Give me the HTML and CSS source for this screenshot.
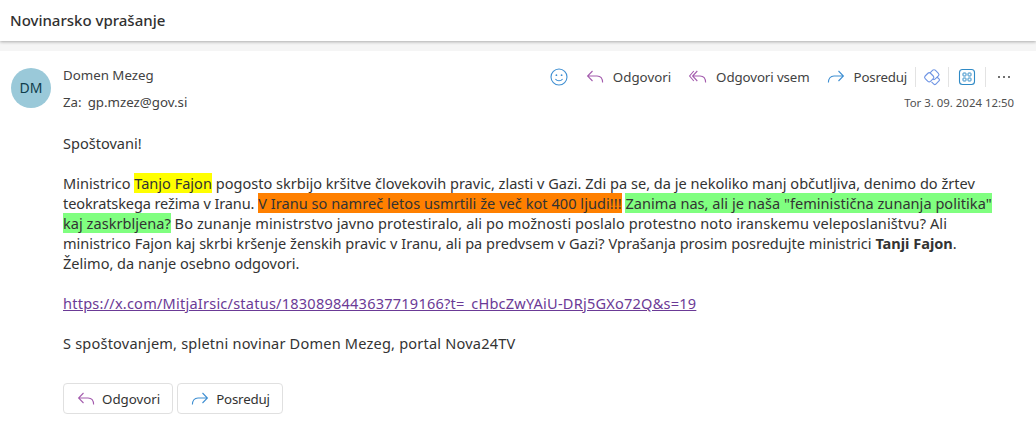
FILE: index.html
```html
<!DOCTYPE html>
<html lang="sl">
<head>
<meta charset="utf-8">
<title>Novinarsko vprašanje</title>
<link rel="stylesheet" href="styles.css">
</head>
<body>
<svg class="defs" width="0" height="0" aria-hidden="true">
  <symbol id="reply" viewBox="0 0 20 20"><path d="M7.5 4 2.6 9l4.9 5M2.6 9H12c3.5 0 5.6 2.5 5.6 6.6" fill="none" stroke="currentColor" stroke-width="1.1"/></symbol>
  <symbol id="replyall" viewBox="0 0 20 20"><path d="M5.8 4 1.6 9l4.2 5M9.3 4 4.6 9l4.7 5M4.8 9H12c3.5 0 5.6 2.5 5.6 6.6" fill="none" stroke="currentColor" stroke-width="1.1"/></symbol>
  <symbol id="forward" viewBox="0 0 20 20"><path d="M12.5 4 17.4 9l-4.9 5M17.4 9H8c-3.5 0-5.6 2.5-5.6 6.6" fill="none" stroke="currentColor" stroke-width="1.1"/></symbol>
</svg>
<header class="topbar"><h1 class="subject">Novinarsko vprašanje</h1></header>
<main class="message">
  <div class="head">
    <div class="avatar">DM</div>
    <div class="people">
      <div class="sender">Domen Mezeg</div>
      <div class="to"><span class="to-label">Za:</span>gp.mzez@gov.si</div>
    </div>
    <div class="meta">
      <div class="actions">
        <svg class="icon smile" viewBox="0 0 20 20"><circle cx="10" cy="10" r="8" fill="none" stroke="currentColor" stroke-width="1.1"/><circle cx="7.4" cy="8.2" r=".9" fill="currentColor"/><circle cx="12.6" cy="8.2" r=".9" fill="currentColor"/><path d="M6.4 12c1.8 2.4 5.4 2.4 7.2 0" fill="none" stroke="currentColor" stroke-width="1.1"/></svg>
        <span class="action a-reply"><svg class="icon purple"><use href="#reply"/></svg>Odgovori</span>
        <span class="action a-all"><svg class="icon purple"><use href="#replyall"/></svg>Odgovori vsem</span>
        <span class="action a-fwd"><svg class="icon blue"><use href="#forward"/></svg>Posreduj</span>
        <span class="sep"></span>
        <svg class="icon diamond" viewBox="0 0 20 20"><rect x="8" y="3.6" width="8" height="8" rx="1.8" transform="rotate(45 12 7.6)" fill="none" stroke="currentColor" stroke-width="1.1"/><rect x="3.5" y="6.5" width="7.5" height="7.5" rx="1.8" transform="rotate(45 7.2 10.2)" fill="#fff" stroke="currentColor" stroke-width="1.1"/><path d="M9.5 14.9l2.6 2.4c.5.4 1 .4 1.5 0l3.6-3.6c.5-.5.5-1 0-1.5l-2.2-2.2" fill="none" stroke="currentColor" stroke-width="1.1"/></svg>
        <span class="sep"></span>
        <svg class="icon apps" viewBox="0 0 20 20"><rect x="2.5" y="2.5" width="15" height="15" rx="3" fill="none" stroke="currentColor" stroke-width="1.1"/><rect x="6" y="6" width="3" height="3" rx=".6" fill="none" stroke="currentColor"/><rect x="11" y="6" width="3" height="3" rx=".6" fill="none" stroke="currentColor"/><rect x="6" y="11" width="3" height="3" rx=".6" fill="none" stroke="currentColor"/><rect x="11" y="11" width="3" height="3" rx=".6" fill="none" stroke="currentColor"/></svg>
        <span class="sep"></span>
        <span class="more"><i></i><i></i><i></i></span>
      </div>
      <div class="date">Tor 3. 09. 2024 12:50</div>
    </div>
  </div>
  <div class="body">
    <p>Spoštovani!</p>
    <p>Ministrico <mark class="yellow">Tanjo Fajon</mark> pogosto skrbijo kršitve človekovih pravic, zlasti v Gazi. Zdi pa se, da je nekoliko manj občutljiva, denimo do žrtev<br>
    <span class="tight">teokratskega režima v Iranu.</span> <mark class="orange">V Iranu so namreč letos usmrtili že več kot 400 ljudi!!!</mark> <mark class="green">Zanima nas, ali je naša "feministična zunanja politika"<br>
    kaj zaskrbljena?</mark> <span class="loose">Bo zunanje ministrstvo javno protestiralo, ali po možnosti poslalo protestno noto iranskemu veleposlaništvu? Ali</span><br>
    ministrico Fajon kaj skrbi kršenje ženskih pravic v Iranu, ali pa predvsem v Gazi? Vprašanja prosim posredujte ministrici <b>Tanji Fajon</b>.<br>
    Želimo, da nanje osebno odgovori.</p>
    <p><a class="link" href="#">https://x.com/MitjaIrsic/status/1830898443637719166?t=_cHbcZwYAiU-DRj5GXo72Q&amp;s=19</a></p>
    <p class="signature">S spoštovanjem, spletni novinar Domen Mezeg, portal Nova24TV</p>
  </div>
  <div class="buttons">
    <span class="btn"><svg class="icon purple"><use href="#reply"/></svg>Odgovori</span>
    <span class="btn btn-fwd"><svg class="icon blue"><use href="#forward"/></svg>Posreduj</span>
  </div>
</main>
</body>
</html>
```
FILE: styles.css
```css
* { box-sizing: border-box; }
html, body { margin: 0; height: 426px; overflow: hidden; }
body { background: #f5f5f5; color: #242424; font-family: "Noto Sans", "Open Sans", sans-serif; font-size: 14px; line-height: 20px; }
.defs { position: absolute; }
.topbar { height: 41px; background: #fff; padding: 0 10px 2px; display: flex; align-items: center; box-shadow: 0 1px 3px rgba(0,0,0,.3); position: relative; }
.subject { margin: 0; font-size: 15px; font-weight: 500; line-height: 20px; color: #303030; }
.message { margin-top: 10px; background: #fff; height: 375px; padding: 15px 0 0 11px; }
.head { display: flex; }
.avatar { width: 40px; height: 40px; border-radius: 50%; background: #9ac9d9; color: #0f3d4c; font-size: 14px; line-height: 40px; text-align: center; margin-top: 2px; flex: none; }
.people { margin-left: 12px; font-size: 13.3px; color: #424242; }
.sender { line-height: 18px; }
.to { line-height: 18px; margin-top: 9px; }
.to-label { margin-right: 6px; }
.meta { margin-left: auto; padding-right: 22px; display: flex; flex-direction: column; align-items: flex-end; }
.actions { display: flex; align-items: center; height: 20px; margin-top: 1px; font-size: 13.3px; color: #424242; }
.action { display: flex; align-items: center; gap: 8px; }
.a-reply { margin-left: 16px; }
.a-all { margin-left: 17px; letter-spacing: -.1px; }
.a-fwd { margin-left: 16px; letter-spacing: -.2px; }
.icon { width: 20px; height: 20px; flex: none; }
.purple { color: #a45dae; }
.blue { color: #3f8fd2; }
.smile { color: #3f8fd2; }
.diamond { color: #6f95e4; margin: 0 6px; }
.apps { color: #2f8ac6; margin: 0 8px; }
.sep { width: 1px; height: 20px; background: #e3e3e3; }
.a-fwd + .sep { margin-left: 8px; }
.more { display: flex; gap: 3px; margin-left: 12px; margin-right: 4px; }
.more i { width: 2px; height: 2px; background: #424242; border-radius: 50%; }
.date { font-size: 11.4px; line-height: 16px; color: #505050; margin-top: 8px; }
.body { margin: 22px 0 0 52px; font-size: 14.55px; color: #333; white-space: nowrap; }
.body p { margin: 0 0 20px; }
.tight { letter-spacing: -.12px; }
.loose { letter-spacing: .08px; }
.signature { letter-spacing: .2px; }
mark { color: inherit; }
.yellow { background: #ffff00; }
.orange { background: #ff8000; letter-spacing: .04px; }
.green { background: #80ff80; letter-spacing: .03px; }
.link { color: #6b3a96; letter-spacing: .22px; }
.buttons { display: flex; gap: 4px; margin: 30px 0 0 52px; }
.btn { display: flex; align-items: center; gap: 6px; height: 31px; padding: 0 12px; border: 1px solid #e0e0e0; border-radius: 4px; font-size: 13.3px; color: #333; background: #fff; }
.btn-fwd { letter-spacing: -.2px; }
```
